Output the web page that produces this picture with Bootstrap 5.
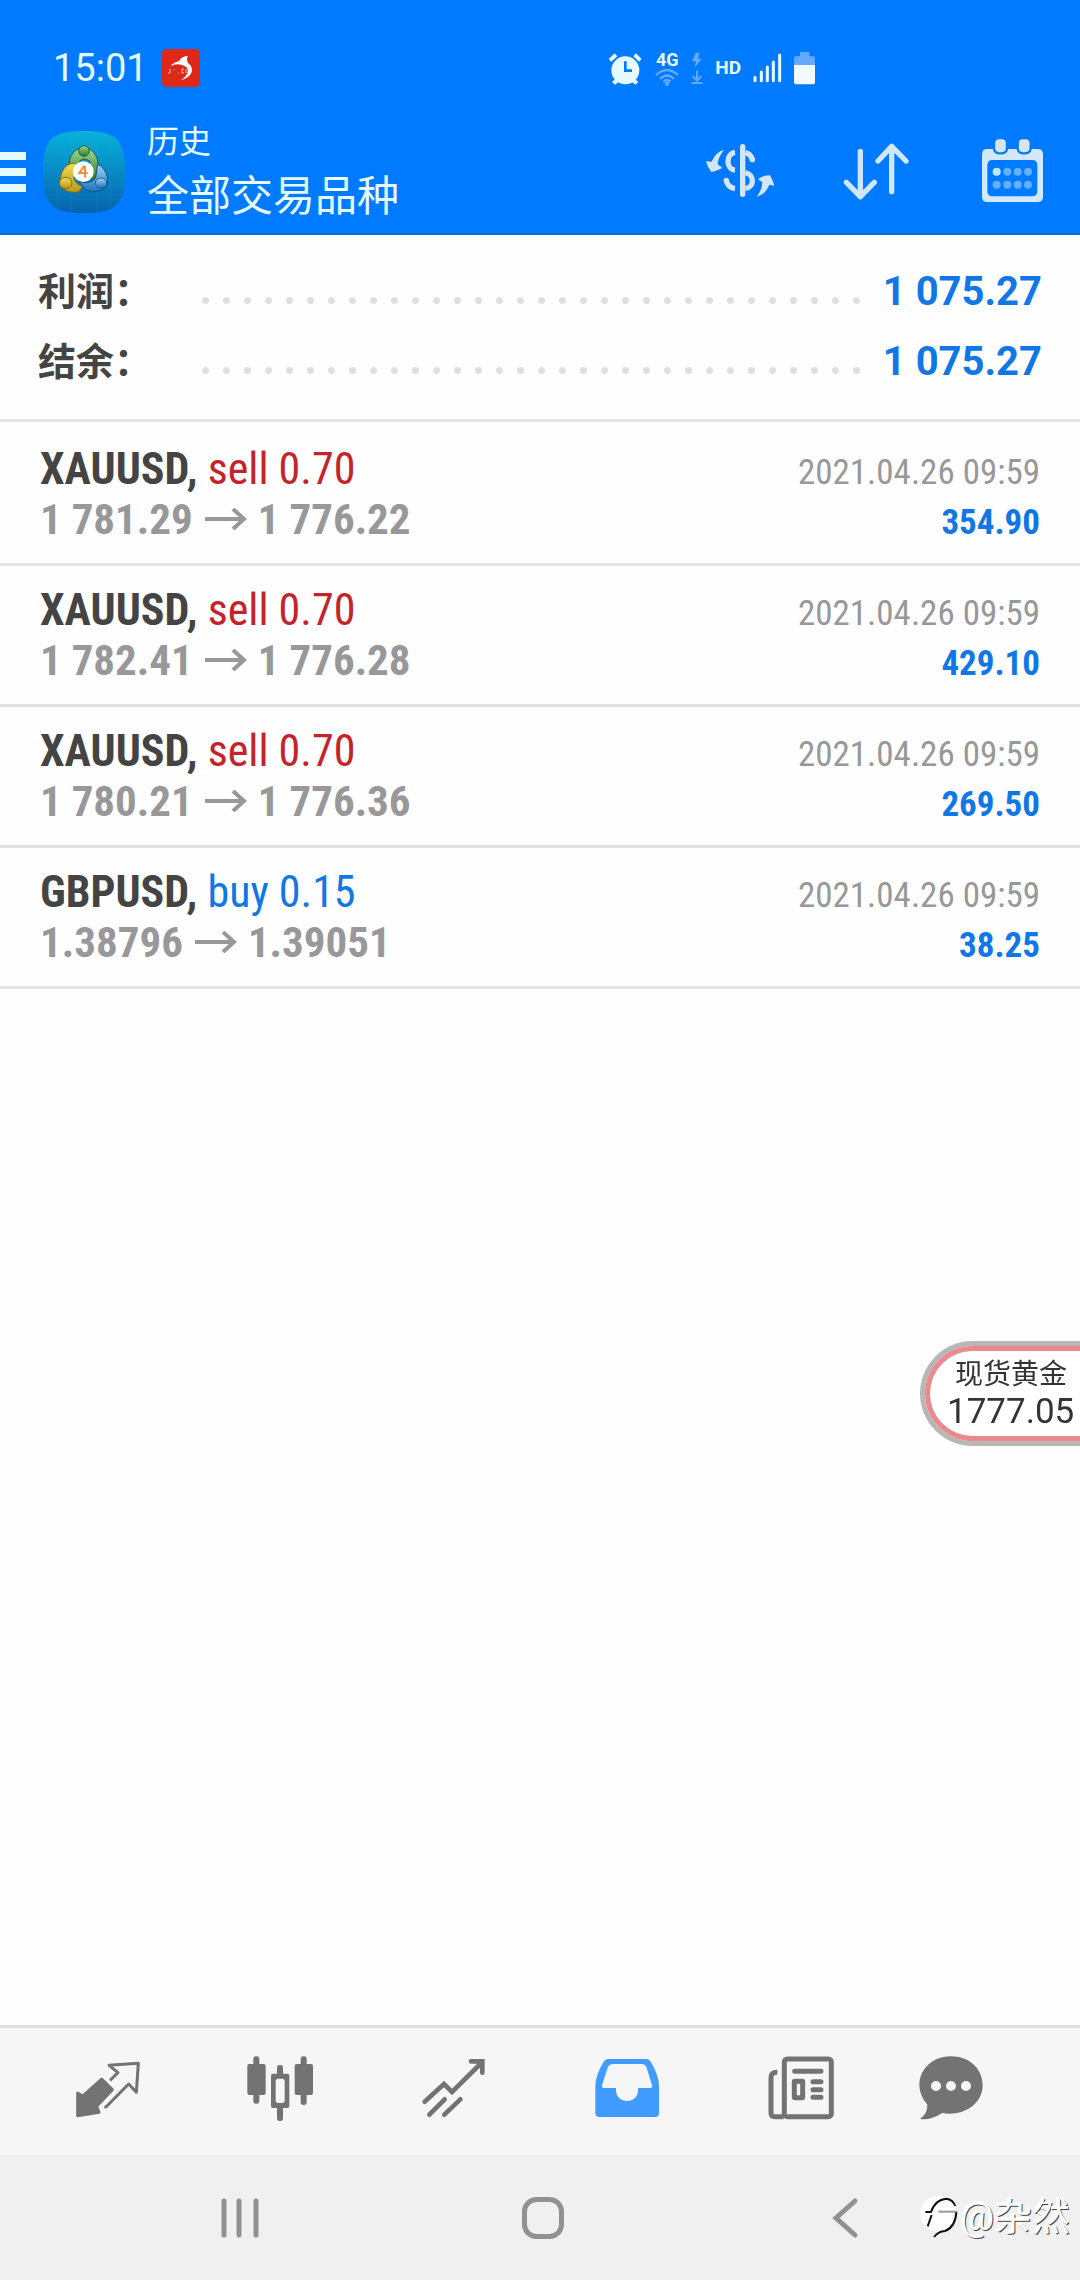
<!DOCTYPE html>
<html lang="zh-CN">
<head>
<meta charset="utf-8">
<meta name="viewport" content="width=device-width, initial-scale=1">
<title>历史</title>
<link href="https://cdn.jsdelivr.net/npm/bootstrap@5.3.0/dist/css/bootstrap.min.css" rel="stylesheet">
<style>
  :root { --brand: #007aff; --ice: #e6fbff; --line: #e3e3e4; --ink: #444; --muted: #98989a; --sys: #919191; --tab: #737373; }
  body { font-family: Roboto, "Noto Sans CJK SC", sans-serif; color: var(--ink); background: #fefefe; }
  svg { display: block; flex: none; }
  .app-top { background: var(--brand); color: var(--ice); border-bottom: 2px solid #0a6fd2; }
  .status-bar { height: 108px; padding: 28px 265px 0 53px; }
  .status-left { gap: 14px; }
  .status-right { gap: 12px; }
  .clock { font-size: 38px; line-height: 40px; }
  .tiny-label { font-size: 18px; line-height: 18px; font-weight: 700; }
  .hd-label { font-size: 19px; line-height: 20px; font-weight: 700; }
  .title-bar { height: 125px; padding-top: 2px; }
  .tool { background: none; border: 0; padding: 0; color: inherit; }
  .tool-right { width: 136px; height: 100px; }
  .titles { margin-left: 22px; }
  .title-small { font-size: 32px; line-height: 50px; font-weight: 400; }
  .title-large { font-size: 42px; line-height: 60px; font-weight: 400; }
  .totals { padding: 22px 38px; border-bottom: 3px solid var(--line); }
  .totals dl > div { height: 70px; }
  .totals dt { width: 157px; font-size: 38px; font-weight: 700; line-height: 70px; }
  .totals dd { font-size: 40px; font-weight: 700; line-height: 70px; color: #1177e6; margin-left: 18px; }
  .leader { height: 7px; margin-top: 17px; background: radial-gradient(circle at center, #dfdfdf 3px, transparent 4px) 0 0 / 21px 7px repeat-x; }
  .deals { padding-top: 3px; }
  .deal { padding: 19px 40px; border-bottom: 3px solid var(--line); font-family: "Roboto Condensed", Roboto, sans-serif; font-size: 44px; line-height: 50px; }
  .deal > div { height: 50px; }
  .deal-price { font-size: 43px; }
  .deal-small { font-size: 35px; }
  .muted { color: var(--muted); }
  .sell { color: #c4232a; }
  .buy { color: #1177e6; }
  .arrow { display: inline-block; margin: 0 11px 7px 12px; vertical-align: middle; }
  .ticker { top: 1341px; right: 0; width: 160px; height: 105px; border: 5px solid #b9b6b6; border-right: 0; border-radius: 53px 0 0 53px; background: #fff; color: #333; }
  .ticker-in { border: 5px solid #ea8a8e; border-right: 0; border-radius: 48px 0 0 48px; padding-left: 17px; }
  .ticker-name { font-size: 28px; line-height: 36px; padding-left: 8px; }
  .ticker-price { font-size: 35px; line-height: 38px; }
  .tabs { height: 130px; padding: 0 65px 2px 20px; background: #f6f6f6; border-top: 3px solid #dfdfe0; color: var(--tab); }
  .tabs a { flex: 1 1 0; color: inherit; }
  .tabs a:last-child { flex: 0 0 128px; }
  .tabs a.active { color: #429bff; }
  .sys-bar { height: 125px; padding: 0 82px 0 88px; background: #f0f0f0; color: var(--sys); }
  .credit { right: 10px; top: 0; height: 125px; color: #fff; font-size: 38px; text-shadow: 1px 1px 0 #444, -1px -1px 0 #fff; }
</style>
</head>
<body class="d-flex flex-column min-vh-100">

<header class="app-top">
  <div class="status-bar d-flex justify-content-between align-items-center">
    <div class="status-left d-flex align-items-center">
      <span class="clock">15:01</span>
      <svg width="38" height="38" viewBox="0 0 38 38"><rect width="38" height="38" rx="5" fill="#df2818"/><path d="M9 16Q13 13 17 12Q20 7 26 7Q24 10 26 14C34 20 29 29 19 31C28 25 28 18 20 16Q14 14 9 17Z" fill="#fff"/><path d="M8 20v4H6M12 20v1M16 24h1M22 20h-2v4h2M24 20v4" stroke="#fff" fill="none" opacity=".7"/></svg>
    </div>
    <div class="status-right d-flex align-items-center">
      <svg width="35" height="33" viewBox="86 62 105 99"><g fill="currentColor"><circle cx="138" cy="117" r="42"/><path d="M88 83 106 66 114 75 96 91ZM187 83 170 66 162 75 179 91ZM98 152 108 142 118 151 107 160ZM177 152 167 142 157 151 168 160Z"/></g><path d="M138 90V118H158" fill="none" stroke="#007aff" stroke-width="8"/></svg>
      <div class="d-flex flex-column align-items-center">
        <span class="tiny-label">4G</span>
        <svg width="24" height="17" viewBox="0 0 24 17" fill="none" stroke="#62aaff" stroke-width="2.4"><path d="M1 6Q12-4 23 6M5 10Q12 3 19 10M8.500 13Q12 9 15.500 13"/><circle cx="12" cy="15" r="1"/></svg>
      </div>
      <svg width="12" height="33" viewBox="326 62 36 99" fill="none" stroke="#62aaff" stroke-width="6"><path d="M340 64H352L347 82H358L337 110L341 90H329Z" fill="#62aaff" stroke="none"/><path d="M344 118V146M331 134 344 148 357 134M328 155H361"/></svg>
      <span class="hd-label">HD</span>
      <svg width="29" height="30" viewBox="520 70 87 90" stroke="currentColor" stroke-width="9" stroke-linecap="round"><path d="M526 143V153M545 127V153M563 112V153M581 97V153M600 76V153"/></svg>
      <svg width="21" height="33" viewBox="642 62 63 99"><path d="M660 62H688V75H699Q705 75 705 81V102H642V81Q642 75 648 75H660Z" fill="#62aaff"/><path d="M642 101H705V153Q705 159 699 159H648Q642 159 642 153Z" fill="#f2f9ff"/></svg>
    </div>
  </div>

  <div class="title-bar d-flex align-items-center">
    <button class="tool" type="button" aria-label="菜单">
      <svg width="27" height="40" viewBox="0 0 27 40" fill="currentColor"><path d="M0 0H26V8H0ZM0 16H26V24H0ZM0 32H26V40H0Z"/></svg>
    </button>
    <svg class="ms-3" width="82" height="82" viewBox="130 390 246 246">
      <defs>
        <linearGradient id="tile" x2="0" y2="1"><stop stop-color="#08b2dc"/><stop offset=".5" stop-color="#0789c4"/><stop offset="1" stop-color="#0763ae"/></linearGradient>
        <linearGradient id="gr" x2="0" y2="1"><stop stop-color="#a4d795"/><stop offset="1" stop-color="#287a28"/></linearGradient>
        <linearGradient id="ye" x2="0" y2="1"><stop stop-color="#f1dc51"/><stop offset="1" stop-color="#b99a1c"/></linearGradient>
        <linearGradient id="bl" x2="0" y2="1"><stop stop-color="#9fd6f8"/><stop offset="1" stop-color="#1c73bd"/></linearGradient>
      </defs>
      <path d="M253 390C350 390 376 416 376 513S350 636 253 636 130 610 130 513 156 390 253 390Z" fill="url(#tile)"/>
      <path d="M175 400V626M214 392V634M292 392V634M331 400V626M134 460H372M131 500H375M132 555H374M140 595H366" stroke="#35b7dc" stroke-width="2" opacity=".2"/>
      <g stroke-width="3">
        <path d="M208 500C206 460 230 440 253 440S302 464 295 516L276 540 270 480Q253 468 240 480L230 500Z" fill="url(#gr)" stroke="#1d6430"/>
        <path d="M224 486C192 488 178 520 182 556Q205 580 238 572L248 556Q225 548 222 530L236 500Z" fill="url(#ye)" stroke="#7f6a1b"/>
        <path d="M294 490C318 500 328 530 322 556Q295 580 262 568L236 542Q275 552 288 530Z" fill="url(#bl)" stroke="#154f87"/>
        <circle cx="253" cy="450" r="16" fill="url(#gr)" stroke="#2a6330"/>
        <ellipse cx="198" cy="546" rx="19" ry="17" fill="url(#ye)" stroke="#80651a"/>
        <ellipse cx="304" cy="546" rx="17" ry="15" fill="url(#bl)" stroke="#1a5c9d"/>
      </g>
      <circle cx="251" cy="512" r="31" fill="#fff"/>
      <path d="M254 494 239 516H264M256 494V530" fill="none" stroke="#ee9138" stroke-width="6"/>
    </svg>
    <div class="titles flex-grow-1">
      <div class="title-small">历史</div>
      <h1 class="title-large m-0">全部交易品种</h1>
    </div>
    <button class="tool tool-right d-flex align-items-center justify-content-center" type="button" aria-label="货币">
      <svg width="72" height="72" viewBox="72 75 216 216" fill="none" stroke="#d2e5fa" stroke-width="16"><path d="M188 107V250" stroke-linecap="round"/><path d="M165 124C137 128 137 175 165 177M138 207Q144 230 165 233M196 125Q212 128 218 148M196 185C224 190 224 230 196 232" stroke-linecap="butt"/><circle cx="139" cy="208" r="8" fill="#d2e5fa" stroke="none"/><circle cx="217" cy="146" r="8" fill="#d2e5fa" stroke="none"/><path d="M132 117Q108 122 94 153L78 150Q83 170 94 183Q108 181 127 171L113 160Q115 137 132 117ZM230 257Q255 252 268 221L283 224Q278 207 270 193Q252 191 234 205L247 214Q246 238 230 257Z" fill="#d2e5fa" stroke="none"/></svg>
    </button>
    <button class="tool tool-right d-flex align-items-center justify-content-center" type="button" aria-label="排序">
      <svg width="72" height="72" viewBox="480 75 216 216" fill="none" stroke="#cfe7fc" stroke-width="16" stroke-linecap="round" stroke-linejoin="round"><path d="M541 121V257M499 214 541 257 583 214M635 242V106M594 150 635 106 678 150"/></svg>
    </button>
    <button class="tool tool-right d-flex align-items-center justify-content-center" type="button" aria-label="日期">
      <svg width="72" height="72" viewBox="888 75 216 216"><path d="M921 114H1073Q1089 114 1089 130V258Q1089 273 1073 273H921Q906 273 906 258V130Q906 114 921 114ZM938 147Q922 147 922 163V240Q922 256 938 256H1056Q1072 256 1072 240V163Q1072 147 1056 147Z" fill="#d2e8fb" fill-rule="evenodd"/><g fill="#d9e4ee" stroke="#007aff" stroke-width="7"><rect x="942" y="81" width="39" height="46" rx="15"/><rect x="1013" y="81" width="39" height="46" rx="15"/></g><g fill="#62b0ff"><circle cx="950" cy="182" r="12" fill="#bfe6ff"/><circle cx="982" cy="182" r="12"/><circle cx="1013" cy="182" r="12"/><circle cx="1044" cy="182" r="12"/><circle cx="950" cy="221" r="12"/><circle cx="982" cy="221" r="12"/><circle cx="1013" cy="221" r="12"/><circle cx="1044" cy="221" r="12"/></g></svg>
    </button>
  </div>
</header>

<main class="flex-grow-1">
  <section class="totals">
    <dl class="m-0">
      <div class="d-flex align-items-center"><dt>利润：</dt><span class="leader flex-grow-1"></span><dd class="mb-0">1 075.27</dd></div>
      <div class="d-flex align-items-center"><dt>结余：</dt><span class="leader flex-grow-1"></span><dd class="mb-0">1 075.27</dd></div>
    </dl>
  </section>
  <ul class="deals list-unstyled m-0">
    <li class="deal">
      <div class="d-flex justify-content-between align-items-baseline"><span><b>XAUUSD,</b> <span class="sell">sell 0.70</span></span><time class="deal-small muted">2021.04.26 09:59</time></div>
      <div class="d-flex justify-content-between align-items-baseline"><b class="deal-price muted">1 781.29<svg class="arrow" width="42" height="22" viewBox="0 0 42 22" fill="none" stroke="currentColor" stroke-width="4"><path d="M0 11H39M28 1 39 11 28 21"/></svg>1 776.22</b><b class="deal-small buy">354.90</b></div>
    </li>
    <li class="deal">
      <div class="d-flex justify-content-between align-items-baseline"><span><b>XAUUSD,</b> <span class="sell">sell 0.70</span></span><time class="deal-small muted">2021.04.26 09:59</time></div>
      <div class="d-flex justify-content-between align-items-baseline"><b class="deal-price muted">1 782.41<svg class="arrow" width="42" height="22" viewBox="0 0 42 22" fill="none" stroke="currentColor" stroke-width="4"><path d="M0 11H39M28 1 39 11 28 21"/></svg>1 776.28</b><b class="deal-small buy">429.10</b></div>
    </li>
    <li class="deal">
      <div class="d-flex justify-content-between align-items-baseline"><span><b>XAUUSD,</b> <span class="sell">sell 0.70</span></span><time class="deal-small muted">2021.04.26 09:59</time></div>
      <div class="d-flex justify-content-between align-items-baseline"><b class="deal-price muted">1 780.21<svg class="arrow" width="42" height="22" viewBox="0 0 42 22" fill="none" stroke="currentColor" stroke-width="4"><path d="M0 11H39M28 1 39 11 28 21"/></svg>1 776.36</b><b class="deal-small buy">269.50</b></div>
    </li>
    <li class="deal">
      <div class="d-flex justify-content-between align-items-baseline"><span><b>GBPUSD,</b> <span class="buy">buy 0.15</span></span><time class="deal-small muted">2021.04.26 09:59</time></div>
      <div class="d-flex justify-content-between align-items-baseline"><b class="deal-price muted">1.38796<svg class="arrow" width="42" height="22" viewBox="0 0 42 22" fill="none" stroke="currentColor" stroke-width="4"><path d="M0 11H39M28 1 39 11 28 21"/></svg>1.39051</b><b class="deal-small buy">38.25</b></div>
    </li>
  </ul>
</main>

<aside class="ticker position-fixed">
  <div class="ticker-in h-100 d-flex flex-column justify-content-center">
    <span class="ticker-name">现货黄金</span>
    <span class="ticker-price">1777.05</span>
  </div>
</aside>

<nav class="tabs d-flex align-items-center">
  <a href="#quotes" class="d-flex justify-content-center" aria-label="行情">
    <svg width="72" height="72" viewBox="92 135 216 216" fill="none" stroke="currentColor" stroke-width="9" stroke-linejoin="round"><path d="M184 207 216 239 169 289 176 307 112 317 112 249 127 258Z" fill="currentColor"/><path d="M209 211 233 188 206 166 294 160 288 247 265 222 197 291H192"/></svg>
  </a>
  <a href="#chart" class="d-flex justify-content-center" aria-label="图表">
    <svg width="72" height="72" viewBox="612 135 216 216" fill="currentColor"><rect x="640" y="139" width="18" height="142" rx="8"/><rect x="622" y="162" width="55" height="93" rx="6"/><rect x="782" y="139" width="18" height="146" rx="8"/><rect x="764" y="162" width="55" height="93" rx="6"/><rect x="711" y="165" width="18" height="168" rx="8"/><rect x="693" y="191" width="55" height="103" rx="6"/><rect x="707" y="206" width="27" height="73" rx="8" fill="#f6f6f6"/></svg>
  </a>
  <a href="#trade" class="d-flex justify-content-center" aria-label="交易">
    <svg width="72" height="72" viewBox="1132 135 216 216" fill="none" stroke="currentColor" stroke-width="14" stroke-linecap="round"><path d="M1152 275 1210 222 1234 246 1325 156M1291 154H1325V188M1166 314 1212 268M1211 314 1259 268" stroke-linejoin="miter"/></svg>
  </a>
  <a href="#history" class="d-flex justify-content-center active" aria-label="历史" aria-current="page">
    <svg width="72" height="72" viewBox="93 135 216 216" fill="currentColor"><path fill-rule="evenodd" d="M145 147H258Q266 147 271 154Q297 195 297 230V309Q297 321 285 321H118Q106 321 106 309V230Q106 195 132 154Q137 147 145 147ZM158 162Q148 162 144 170L126 226Q124 234 132 234H168V242C170 283 232 283 234 242V234H270Q279 234 276 226L259 170Q255 162 246 162Z"/></svg>
  </a>
  <a href="#news" class="d-flex justify-content-center" aria-label="新闻">
    <svg width="72" height="72" viewBox="613 135 216 216" fill="none" stroke="currentColor" stroke-width="15"><rect x="674" y="147" width="141" height="173" rx="9"/><path d="M653 187Q634 186 634 202V308Q634 320 646 320H672"/><path d="M705 184H784M760 215H784M760 239H784M760 262H784" stroke-linecap="round"/><rect x="704" y="214" width="25" height="49" rx="1"/></svg>
  </a>
  <a href="#chat" class="d-flex justify-content-center" aria-label="消息">
    <svg width="72" height="72" viewBox="1065 135 216 216" fill="currentColor"><path fill-rule="evenodd" d="M1173 139C1228 139 1268 176 1268 226C1268 285 1205 321 1147 309Q1110 332 1080 327Q1103 310 1102 284Q1078 256 1078 224C1080 174 1120 139 1173 139ZM1113 228a15 15 0 1 0 30 0a15 15 0 1 0-30 0M1158 228a15 15 0 1 0 30 0a15 15 0 1 0-30 0M1203 228a15 15 0 1 0 30 0a15 15 0 1 0-30 0"/></svg>
  </a>
</nav>

<footer class="sys-bar d-flex align-items-center position-relative">
  <button class="tool flex-fill d-flex justify-content-center" type="button" aria-label="最近任务"><svg width="44" height="44" viewBox="0 0 44 44" stroke="currentColor" stroke-width="5" stroke-linecap="round"><path d="M6 5V39M21 5V39M38 5V39"/></svg></button>
  <button class="tool flex-fill d-flex justify-content-center" type="button" aria-label="主屏幕"><svg width="44" height="44" viewBox="0 0 44 44" fill="none" stroke="currentColor" stroke-width="5"><rect x="3.500" y="3.500" width="37" height="37" rx="12"/></svg></button>
  <button class="tool flex-fill d-flex justify-content-center" type="button" aria-label="返回"><svg width="44" height="44" viewBox="0 0 44 44" fill="none" stroke="currentColor" stroke-width="5" stroke-linecap="round"><path d="M31 5 12 22 31 39"/></svg></button>
  <div class="credit position-absolute d-flex align-items-center">
    <svg width="41" height="45" viewBox="48 62 123 135"><circle cx="106" cy="118" r="54" fill="#fff"/><g fill="none" stroke="#111" stroke-width="6"><path d="M67 113H84Q96 76 130 73 149 75 157 95M86 122 74 156M160 112Q158 158 126 170 106 171 93 188"/><path d="M106 112H160" stroke="#999"/></g></svg>
    <span>@杂然</span>
  </div>
</footer>

<script src="https://cdn.jsdelivr.net/npm/bootstrap@5.3.0/dist/js/bootstrap.bundle.min.js"></script>
</body>
</html>
